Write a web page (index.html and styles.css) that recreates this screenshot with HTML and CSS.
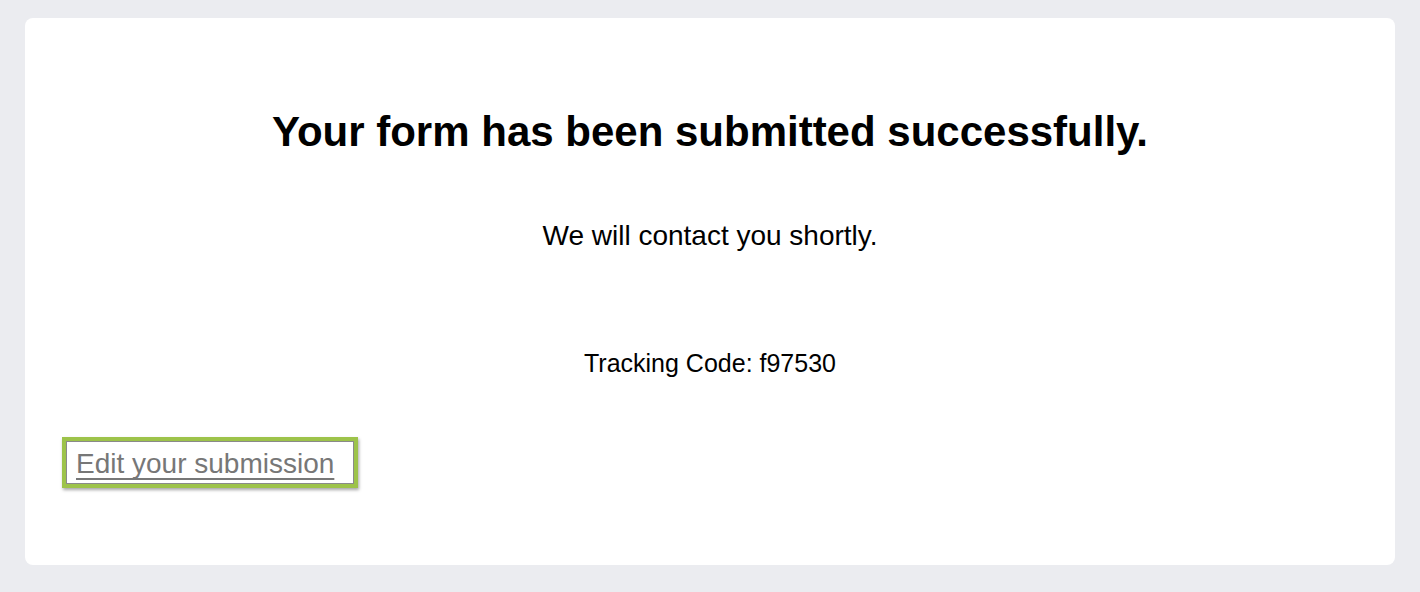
FILE: index.html
```html
<!DOCTYPE html>
<html>
<head>
<meta charset="utf-8">
<link rel="stylesheet" href="styles.css">
</head>
<body>
<main class="card">
  <h1 class="title">Your form has been submitted successfully.</h1>
  <p class="subtitle">We will contact you shortly.</p>
  <p class="tracking">Tracking Code: f97530</p>
  <div class="edit-row">
    <a class="edit-link" href="#">Edit your submission</a>
  </div>
</main>
</body>
</html>
```
FILE: styles.css
```css
html, body {
  margin: 0;
  padding: 0;
}
body {
  background: #ebecf0;
  font-family: "Liberation Sans", Arial, sans-serif;
  color: #000;
  padding: 18px 25px 27px 25px;
}
.card {
  background: #fff;
  border-radius: 8px;
  height: 547px;
  box-sizing: border-box;
  padding: 90px 37px 0 37px;
  display: flex;
  flex-direction: column;
}
.title {
  margin: 0;
  text-align: center;
  font-size: 42px;
  line-height: 48px;
  font-weight: bold;
}
.subtitle {
  margin: 64px 0 0 0;
  text-align: center;
  font-size: 28px;
  line-height: 32px;
}
.tracking {
  margin: 96px 0 0 0;
  text-align: center;
  font-size: 25px;
  line-height: 30px;
}
.edit-row {
  margin-top: 59px;
  display: flex;
}
.edit-link {
  display: inline-block;
  border: 4px solid #9dc34a;
  box-shadow: inset 0 0 0 1px #8a8a8a, 1px 2px 3px rgba(0,0,0,0.35);
  padding: 7px 20px 4px 10px;
  color: #777;
  font-size: 28px;
  line-height: 32px;
  text-decoration: underline;
  text-decoration-thickness: 2px;
  text-underline-offset: 5px;
  text-decoration-skip-ink: none;
}
```
